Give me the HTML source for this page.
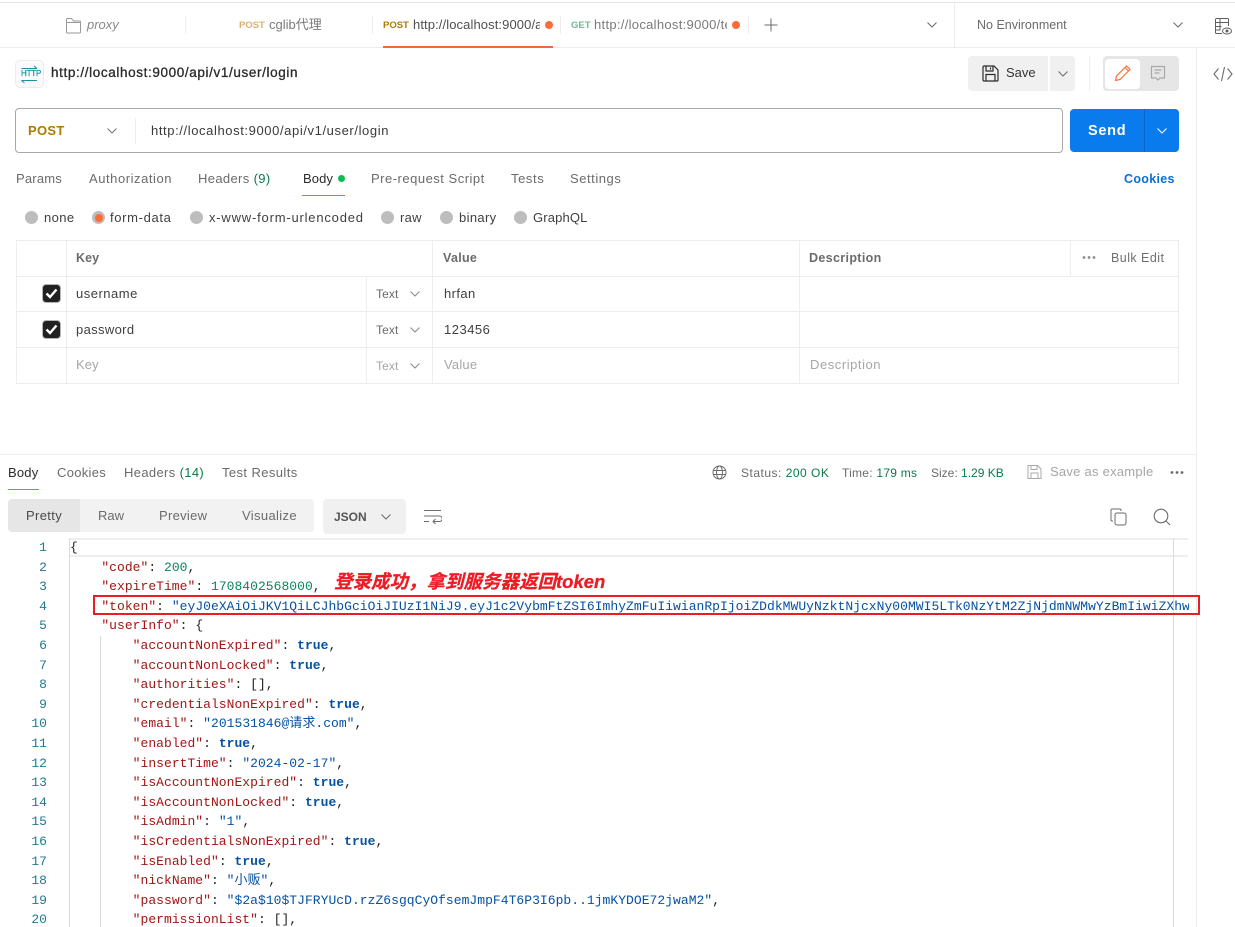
<!DOCTYPE html>
<html><head><meta charset="utf-8">
<style>
html,body{margin:0;padding:0;background:#fff}
#p{position:relative;width:1235px;height:927px;overflow:hidden;background:#fff;font-family:"Liberation Sans","Noto Sans CJK SC",sans-serif;font-size:13px;color:#6b6b6b}
#p div,#p svg{position:absolute}
.t{white-space:nowrap;line-height:16px;letter-spacing:.35px}
.r{background:#ededed}
.rd{width:13px;height:13px;border-radius:50%;background:#bdbdbd}
.code{font-family:"Liberation Mono","Noto Sans CJK SC",monospace;font-size:13px;line-height:19.6px;white-space:pre;letter-spacing:.03px;color:#212121}
.k{color:#a31515}.n{color:#098658}.s{color:#0451a5}.b{color:#0451a5;font-weight:bold}
.ln{font-family:"Liberation Mono",monospace;font-size:13px;line-height:19.6px;color:#237893;text-align:right;white-space:pre;letter-spacing:.03px}
</style></head><body><div id="p">

<!-- top bar -->
<div class="r" style="left:0;top:2px;width:1235px;height:1px;background:#e6e6e6"></div>
<div class="r" style="left:0;top:47px;width:1235px;height:1px"></div>
<svg style="left:65px;top:17px" width="17" height="17" viewBox="0 0 17 17" fill="none" stroke="#9a9a9a"><path d="M1.500 15.500V2.500a1 1 0 0 1 1-1h4l2 2.500h6a1 1 0 0 1 1 1v10a1 1 0 0 1-1 1h-12a1 1 0 0 1-1-1zM1.500 5.500h14"/></svg>
<div class="t" style="left:87px;top:17px;font-style:italic;color:#8a8a8a;letter-spacing:0">proxy</div>
<div class="r" style="left:185px;top:16px;width:1px;height:18px"></div>
<div class="t" style="left:239px;top:18px;font-size:9.500px;font-weight:bold;color:#d9b36c;letter-spacing:0">POST</div>
<div class="t" style="left:269px;top:17px;color:#7a7a7a;letter-spacing:0">cglib代理</div>
<div class="r" style="left:372px;top:16px;width:1px;height:18px"></div>
<div class="t" style="left:383px;top:18px;font-size:9.500px;font-weight:bold;color:#ad7a03;letter-spacing:0">POST</div>
<div class="t" style="left:413px;top:17px;width:127px;overflow:hidden;color:#4f4f4f;letter-spacing:.1px">http://localhost:9000/api</div>
<div style="left:545px;top:21px;width:8px;height:8px;border-radius:50%;background:#ff6c37"></div>
<div style="left:383px;top:46px;width:170px;height:2px;background:#f0693a"></div>
<div class="r" style="left:560px;top:16px;width:1px;height:18px"></div>
<div class="t" style="left:571px;top:18px;font-size:9.500px;font-weight:bold;color:#6fbb93;letter-spacing:0">GET</div>
<div class="t" style="left:594px;top:17px;width:133px;overflow:hidden;color:#7a7a7a;letter-spacing:.3px">http://localhost:9000/test</div>
<div style="left:732px;top:21px;width:8px;height:8px;border-radius:50%;background:#ff6c37"></div>
<div class="r" style="left:748px;top:16px;width:1px;height:18px"></div>
<svg style="left:763px;top:17px" width="16" height="16" viewBox="0 0 16 16" stroke="#6b6b6b" fill="none"><path d="M8 1.500v13M1.500 8h13"/></svg>
<svg style="left:926px;top:21px" width="12" height="8" viewBox="0 0 12 8" stroke="#6b6b6b" fill="none"><path d="M1.500 1.500L6 6l4.500-4.500"/></svg>
<div class="r" style="left:954px;top:3px;width:1px;height:44px"></div>
<div class="t" style="left:977px;top:17px;font-size:12.500px;letter-spacing:0">No Environment</div>
<svg style="left:1172px;top:21px" width="12" height="8" viewBox="0 0 12 8" stroke="#6b6b6b" fill="none"><path d="M1.500 1.500L6 6l4.500-4.500"/></svg>
<svg style="left:1214px;top:17px" width="19" height="19" viewBox="0 0 19 19" fill="none" stroke="#5f5f5f"><path d="M8 16.500H2.500a1 1 0 0 1-1-1v-13a1 1 0 0 1 1-1h11a1 1 0 0 1 1 1V9M1.500 5.500h13M1.500 9.500h6M1.500 13h5M6 2v11"/><ellipse cx="13" cy="14" rx="4.500" ry="3"/><circle cx="13" cy="14" r="1" fill="#5f5f5f"/></svg>

<div class="r" style="left:1196px;top:48px;width:1px;height:879px"></div>

<!-- title -->
<div style="left:15px;top:60px;width:29px;height:28px;border:1px solid #ececec;border-radius:5px;background:#fafafa;box-sizing:border-box"></div>
<svg style="left:20px;top:65px" width="20" height="20" viewBox="0 0 20 20" fill="none" stroke="#1f8fa3"><path d="M1.500 3.500h15.500M14 1l3 2.500M1.500 15.500H17M1.500 15.500l3 2.500"/></svg>
<div class="t" style="left:21px;top:69px;font-size:8px;line-height:10px;color:#1f8fa3;letter-spacing:-.2px;font-weight:normal;-webkit-text-stroke:.2px #1f8fa3">HTTP</div>
<div class="t" style="left:51px;top:65px;font-size:13.500px;letter-spacing:.62px;color:#2a2a2a;-webkit-text-stroke:.3px #2a2a2a">http://localhost:9000/api/v1/user/login</div>

<!-- save -->
<div style="left:968px;top:56px;width:80px;height:35px;background:#f0f0f0;border-radius:4px 0 0 4px"></div>
<svg style="left:982px;top:65px" width="17" height="17" viewBox="0 0 17 17" fill="none" stroke="#2b2b2b" stroke-width="1.200"><path d="M1 2a1 1 0 0 1 1-1h10l4 4v10a1 1 0 0 1-1 1H2a1 1 0 0 1-1-1zM4 1v5h7V1M8.500 2.500v2M4 16v-6.500h9V16"/></svg>
<div class="t" style="left:1006px;top:65px;color:#333;letter-spacing:0">Save</div>
<div style="left:1050px;top:56px;width:25px;height:35px;background:#f0f0f0;border-radius:0 4px 4px 0"></div>
<svg style="left:1057px;top:70px" width="12" height="8" viewBox="0 0 12 8" stroke="#6b6b6b" fill="none"><path d="M1.500 1.500L6 6l4.500-4.500"/></svg>
<div class="r" style="left:1089px;top:56px;width:1px;height:35px"></div>
<div style="left:1103px;top:56px;width:76px;height:35px;background:#e6e6e6;border-radius:4px"></div>
<div style="left:1105px;top:59px;width:35px;height:30px;background:#fff;border-radius:4px"></div>
<svg style="left:1114px;top:64px" width="18" height="18" viewBox="0 0 18 18" fill="none" stroke="#ff6c37" stroke-width="1.200"><path d="M1.500 16.500l1-4.500L12.500 2l3.500 3.500L6 15.500zM11 3.500L14.500 7"/></svg>
<svg style="left:1150px;top:65px" width="17" height="17" viewBox="0 0 17 17" fill="none" stroke="#a8a8a8" stroke-width="1.200"><path d="M1.500 1.500h13v11.500H10L8 15l-2-2H1.500zM4.500 5h7M4.500 8h5"/></svg>
<svg style="left:1213px;top:66px" width="20" height="16" viewBox="0 0 20 16" fill="none" stroke="#6b6b6b" stroke-width="1.100"><path d="M5.500 2.500L1 8l4.500 5.500M14.500 2.500L19 8l-4.500 5.500M11.500 1L8.500 15"/></svg>

<!-- URL -->
<div style="left:15px;top:108px;width:1048px;height:45px;border:1px solid #a8a8a8;border-radius:4px;box-sizing:border-box"></div>
<div class="t" style="left:28px;top:123px;font-weight:bold;color:#ad7a03;letter-spacing:.3px">POST</div>
<svg style="left:106px;top:127px" width="12" height="8" viewBox="0 0 12 8" stroke="#777" fill="none"><path d="M1.500 1.500L6 6l4.500-4.500"/></svg>
<div class="r" style="left:135px;top:118px;width:1px;height:26px"></div>
<div class="t" style="left:151px;top:123px;color:#3a3a3a;letter-spacing:.6px">http://localhost:9000/api/v1/user/login</div>
<div style="left:1070px;top:109px;width:109px;height:43px;background:#097bed;border-radius:4px"></div>
<div style="left:1144px;top:109px;width:1px;height:43px;background:#0265d2"></div>
<div class="t" style="left:1088px;top:123px;color:#fff;font-weight:bold;font-size:14.500px;letter-spacing:.7px">Send</div>
<svg style="left:1156px;top:127px" width="12" height="8" viewBox="0 0 12 8" stroke="#fff" fill="none"><path d="M1.500 1.500L6 6l4.500-4.500"/></svg>

<!-- request tabs -->
<div class="t" style="left:16px;top:171px;letter-spacing:.2px">Params</div>
<div class="t" style="left:89px;top:171px;letter-spacing:.55px">Authorization</div>
<div class="t" style="left:198px;top:171px">Headers <span style="color:#0c7a4a">(9)</span></div>
<div class="t" style="left:303px;top:171px;color:#2b2b2b;letter-spacing:.1px">Body</div>
<div style="left:338px;top:175px;width:7px;height:7px;border-radius:50%;background:#0cbb52"></div>
<div style="left:302px;top:195px;width:43px;height:1px;background:#f0693a"></div>
<div class="t" style="left:371px;top:171px;letter-spacing:.5px">Pre-request Script</div>
<div class="t" style="left:511px;top:171px;letter-spacing:.6px">Tests</div>
<div class="t" style="left:570px;top:171px;letter-spacing:.55px">Settings</div>
<div class="t" style="left:1124px;top:171px;color:#0a6fd8;font-weight:bold;font-size:12.500px;letter-spacing:.3px">Cookies</div>

<!-- radio -->
<div class="rd" style="left:25px;top:211px"></div><div class="t" style="left:44px;top:210px;color:#3f3f3f;letter-spacing:.4px">none</div>
<div class="rd" style="left:92px;top:211px"></div><div style="left:95px;top:214px;width:8px;height:8px;border-radius:50%;background:#ff6c37"></div><div class="t" style="left:110px;top:210px;color:#3f3f3f;letter-spacing:.65px">form-data</div>
<div class="rd" style="left:190px;top:211px"></div><div class="t" style="left:209px;top:210px;color:#3f3f3f;letter-spacing:.8px">x-www-form-urlencoded</div>
<div class="rd" style="left:381px;top:211px"></div><div class="t" style="left:400px;top:210px;color:#3f3f3f;letter-spacing:.3px">raw</div>
<div class="rd" style="left:440px;top:211px"></div><div class="t" style="left:459px;top:210px;color:#3f3f3f">binary</div>
<div class="rd" style="left:514px;top:211px"></div><div class="t" style="left:533px;top:210px;color:#3f3f3f;letter-spacing:.15px">GraphQL</div>

<!-- table -->
<div style="left:16px;top:240px;width:1163px;height:144px;border:1px solid #ededed;box-sizing:border-box"></div>
<div class="r" style="left:16px;top:276px;width:1163px;height:1px"></div>
<div class="r" style="left:16px;top:311px;width:1163px;height:1px"></div>
<div class="r" style="left:16px;top:347px;width:1163px;height:1px"></div>
<div class="r" style="left:66px;top:240px;width:1px;height:144px"></div>
<div class="r" style="left:366px;top:277px;width:1px;height:107px"></div>
<div class="r" style="left:432px;top:240px;width:1px;height:144px"></div>
<div class="r" style="left:799px;top:240px;width:1px;height:144px"></div>
<div class="r" style="left:1070px;top:240px;width:1px;height:36px"></div>
<div class="t" style="left:76px;top:250px;font-weight:bold;font-size:12.500px;letter-spacing:.1px">Key</div>
<div class="t" style="left:443px;top:250px;font-weight:bold;font-size:12.500px;letter-spacing:.3px">Value</div>
<div class="t" style="left:809px;top:250px;font-weight:bold;font-size:12.500px">Description</div>
<svg style="left:1082px;top:255px" width="15" height="5"><circle cx="2" cy="2.500" r="1.400" fill="#8a8a8a"/><circle cx="7" cy="2.500" r="1.400" fill="#8a8a8a"/><circle cx="12" cy="2.500" r="1.400" fill="#8a8a8a"/></svg>
<div class="t" style="left:1111px;top:250px;color:#6f6f6f;font-size:12.500px;letter-spacing:.45px">Bulk Edit</div>

<div style="left:43px;top:285px;width:17px;height:17px;background:#212121;border-radius:3px;box-shadow:0 0 0 1px #b5b5b5"></div>
<svg style="left:42px;top:284px" width="19" height="19" fill="none" stroke="#fff" stroke-width="2.400"><path d="M4.500 9.500l3.500 3.500 6.500-7.500"/></svg>
<div class="t" style="left:76px;top:286px;color:#3f3f3f;letter-spacing:.5px">username</div>
<div class="t" style="left:376px;top:286px;font-size:12px;letter-spacing:.1px">Text</div>
<svg style="left:409px;top:290px" width="12" height="8" viewBox="0 0 12 8" stroke="#8a8a8a" fill="none"><path d="M1.500 1.500L6 6l4.500-4.500"/></svg>
<div class="t" style="left:444px;top:286px;color:#3f3f3f;letter-spacing:.4px">hrfan</div>

<div style="left:43px;top:321px;width:17px;height:17px;background:#212121;border-radius:3px;box-shadow:0 0 0 1px #b5b5b5"></div>
<svg style="left:42px;top:320px" width="19" height="19" fill="none" stroke="#fff" stroke-width="2.400"><path d="M4.500 9.500l3.500 3.500 6.500-7.500"/></svg>
<div class="t" style="left:76px;top:322px;color:#3f3f3f;letter-spacing:.35px">password</div>
<div class="t" style="left:376px;top:322px;font-size:12px;letter-spacing:.1px">Text</div>
<svg style="left:409px;top:326px" width="12" height="8" viewBox="0 0 12 8" stroke="#8a8a8a" fill="none"><path d="M1.500 1.500L6 6l4.500-4.500"/></svg>
<div class="t" style="left:444px;top:322px;color:#3f3f3f;letter-spacing:.5px">123456</div>

<div class="t" style="left:76px;top:357px;color:#a6a6a6;letter-spacing:.1px">Key</div>
<div class="t" style="left:376px;top:358px;font-size:12px;color:#a6a6a6;letter-spacing:.1px">Text</div>
<svg style="left:409px;top:362px" width="12" height="8" viewBox="0 0 12 8" stroke="#8a8a8a" fill="none"><path d="M1.500 1.500L6 6l4.500-4.500"/></svg>
<div class="t" style="left:444px;top:357px;color:#a6a6a6;letter-spacing:.2px">Value</div>
<div class="t" style="left:810px;top:357px;color:#a6a6a6;letter-spacing:.55px">Description</div>

<!-- response header -->
<div class="r" style="left:0;top:454px;width:1196px;height:1px"></div>
<div class="t" style="left:8px;top:465px;color:#2b2b2b;letter-spacing:.2px">Body</div>
<div style="left:8px;top:489px;width:31px;height:1px;background:#f0693a"></div>
<div class="t" style="left:57px;top:465px;letter-spacing:.3px">Cookies</div>
<div class="t" style="left:124px;top:465px">Headers <span style="color:#0c7a4a">(14)</span></div>
<div class="t" style="left:222px;top:465px;letter-spacing:.4px">Test Results</div>

<svg style="left:712px;top:465px" width="15" height="15" viewBox="0 0 15 15" fill="none" stroke="#6b6b6b"><circle cx="7.500" cy="7.500" r="6.500"/><ellipse cx="7.500" cy="7.500" rx="3" ry="6.500"/><path d="M1 5.500h13M1 9.500h13"/></svg>
<div class="t" style="left:741px;top:465px;font-size:12px;letter-spacing:.5px">Status: <span style="color:#0c7a4a">200 OK</span></div>
<div class="t" style="left:842px;top:465px;font-size:12px;letter-spacing:.25px">Time: <span style="color:#0c7a4a">179 ms</span></div>
<div class="t" style="left:931px;top:465px;font-size:12px;letter-spacing:0">Size: <span style="color:#0c7a4a">1.29 KB</span></div>
<svg style="left:1027px;top:464px" width="15" height="16" viewBox="0 0 15 16" fill="none" stroke="#a8a8a8"><path d="M1 1.500h9.500L14 5v9.500H1zM4 1.500v4h6v-4M4 14.500V9h7v5.500"/></svg>
<div class="t" style="left:1050px;top:464px;color:#a6a6a6;letter-spacing:.25px">Save as example</div>
<svg style="left:1170px;top:470px" width="15" height="5"><circle cx="2" cy="2.500" r="1.400" fill="#6b6b6b"/><circle cx="7" cy="2.500" r="1.400" fill="#6b6b6b"/><circle cx="12" cy="2.500" r="1.400" fill="#6b6b6b"/></svg>

<div style="left:8px;top:499px;width:306px;height:33px;background:#f2f2f2;border-radius:4px"></div>
<div style="left:8px;top:499px;width:72px;height:33px;background:#e6e6e6;border-radius:4px 0 0 4px"></div>
<div class="t" style="left:26px;top:508px;color:#4a4a4a">Pretty</div>
<div class="t" style="left:98px;top:508px;letter-spacing:0">Raw</div>
<div class="t" style="left:159px;top:508px;letter-spacing:.3px">Preview</div>
<div class="t" style="left:242px;top:508px">Visualize</div>
<div style="left:323px;top:499px;width:83px;height:35px;background:#f0f0f0;border-radius:4px"></div>
<div class="t" style="left:334px;top:509px;font-weight:bold;font-size:12px;color:#555;letter-spacing:0">JSON</div>
<svg style="left:380px;top:513px" width="12" height="8" viewBox="0 0 12 8" stroke="#6b6b6b" fill="none"><path d="M1.500 1.500L6 6l4.500-4.500"/></svg>
<svg style="left:423px;top:508px" width="19" height="17" viewBox="0 0 19 17" fill="none" stroke="#6b6b6b"><path d="M1 2.500h17M1 8h15.500a2.300 2.300 0 0 1 0 5.500H10M12.500 11L10 13.500l2.500 2.500M1 13.500h5"/></svg>
<svg style="left:1110px;top:508px" width="17" height="18" viewBox="0 0 17 18" fill="none" stroke="#6b6b6b"><rect x="5" y="5" width="11" height="12" rx="2"/><path d="M3 13H2a1 1 0 0 1-1-1V2a1 1 0 0 1 1-1h8a1 1 0 0 1 1 1v1"/></svg>
<svg style="left:1153px;top:508px" width="18" height="18" viewBox="0 0 18 18" fill="none" stroke="#6b6b6b" stroke-width="1.100"><circle cx="8" cy="8" r="6.800"/><path d="M13 13l4 4"/></svg>

<!-- editor -->
<div style="left:70px;top:538px;width:1118px;height:19px;border-top:2px solid #eee;border-bottom:2px solid #eee;box-sizing:border-box"></div>
<div class="r" style="left:69px;top:538px;width:1px;height:389px;background:#dcdcdc"></div>
<div class="r" style="left:100px;top:636px;width:1px;height:291px;background:#d8d8d8"></div>
<div class="r" style="left:1173px;top:538px;width:1px;height:389px;background:#dcdcdc"></div>
<div class="ln" style="left:8px;top:538px;width:39px">1
2
3
4
5
6
7
8
9
10
11
12
13
14
15
16
17
18
19
20</div>
<div class="code" style="left:70px;top:538px;width:1119px;overflow:hidden">{
    <span class="k">"code"</span>: <span class="n">200</span>,
    <span class="k">"expireTime"</span>: <span class="n">1708402568000</span>,
    <span class="k">"token"</span>: <span class="s">"eyJ0eXAiOiJKV1QiLCJhbGciOiJIUzI1NiJ9.eyJ1c2VybmFtZSI6ImhyZmFuIiwianRpIjoiZDdkMWUyNzktNjcxNy00MWI5LTk0NzYtM2ZjNjdmNWMwYzBmIiwiZXhw</span>
    <span class="k">"userInfo"</span>: {
        <span class="k">"accountNonExpired"</span>: <span class="b">true</span>,
        <span class="k">"accountNonLocked"</span>: <span class="b">true</span>,
        <span class="k">"authorities"</span>: [],
        <span class="k">"credentialsNonExpired"</span>: <span class="b">true</span>,
        <span class="k">"email"</span>: <span class="s">"201531846@请求.com"</span>,
        <span class="k">"enabled"</span>: <span class="b">true</span>,
        <span class="k">"insertTime"</span>: <span class="s">"2024-02-17"</span>,
        <span class="k">"isAccountNonExpired"</span>: <span class="b">true</span>,
        <span class="k">"isAccountNonLocked"</span>: <span class="b">true</span>,
        <span class="k">"isAdmin"</span>: <span class="s">"1"</span>,
        <span class="k">"isCredentialsNonExpired"</span>: <span class="b">true</span>,
        <span class="k">"isEnabled"</span>: <span class="b">true</span>,
        <span class="k">"nickName"</span>: <span class="s">"小贩"</span>,
        <span class="k">"password"</span>: <span class="s">"$2a$10$TJFRYUcD.rzZ6sgqCyOfsemJmpF4T6P3I6pb..1jmKYDOE72jwaM2"</span>,
        <span class="k">"permissionList"</span>: [],</div>

<!-- annotation -->
<div style="left:93px;top:595px;width:1107px;height:20px;border:2px solid #ed1c24;box-sizing:border-box"></div>
<div class="t" style="left:334px;top:572px;line-height:20px;font-size:18.500px;font-weight:bold;font-style:italic;color:#ed1c24;letter-spacing:0;-webkit-text-stroke:.3px #ed1c24">登录成功，拿到服务器返回token</div>

</div></body></html>
